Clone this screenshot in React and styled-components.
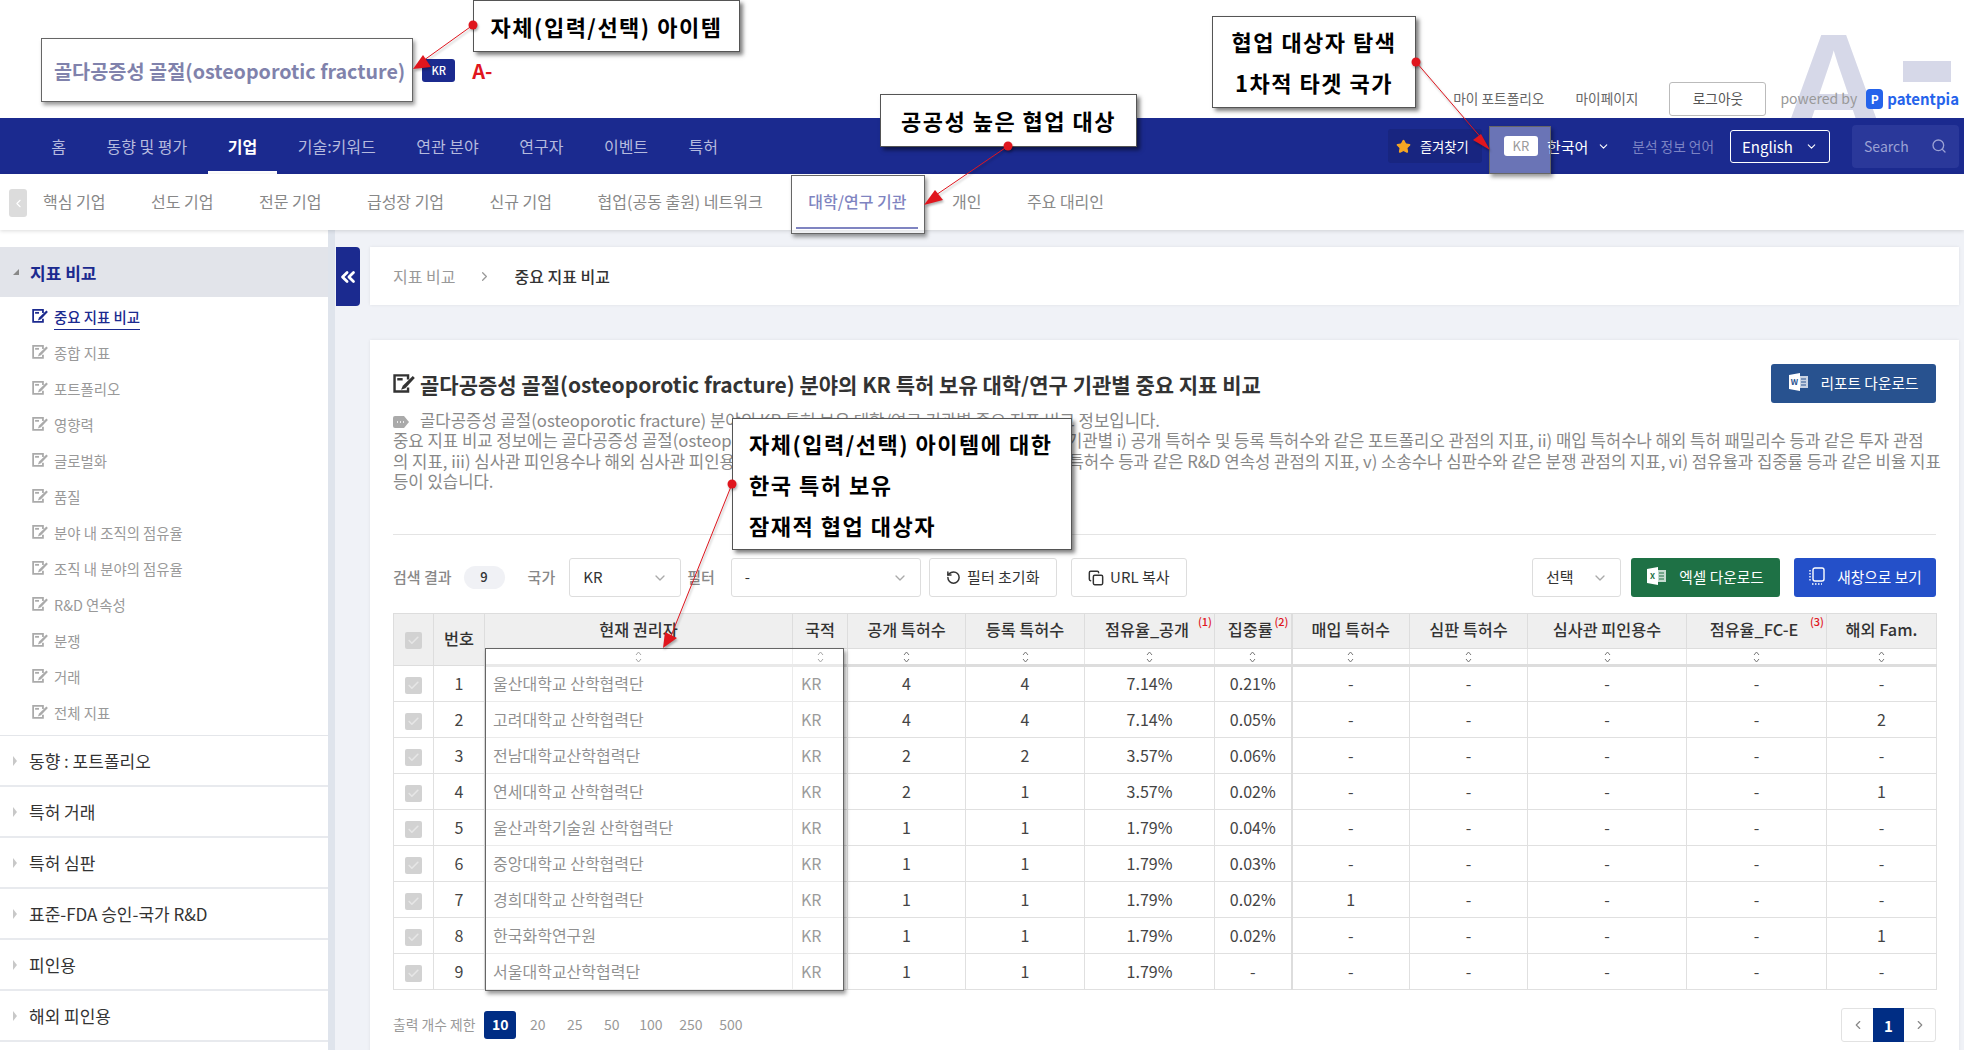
import React from "react";
import styled, { createGlobalStyle } from "styled-components";
import { ChevronDown, ChevronLeft, ChevronRight, ChevronsLeft, Search, Star, RotateCcw, Copy, Check } from "lucide-react";

const GlobalStyle = createGlobalStyle`
    html, body { margin: 0; padding: 0; background: #f0f2f7; }
    * { box-sizing: border-box; }
    body { font-family: "Noto Sans CJK KR", "Noto Sans", sans-serif; color: #333; }
`;

const Page = styled.div`
    position: relative;
    width: 1964px;
    height: 1050px;
    overflow: hidden;
    background: #f0f2f7;
`;

/* header */
const TopBar = styled.header`
    position: relative;
    height: 118px;
    background: #fff;
    overflow: hidden;
`;
const Watermark = styled.div`
    position: absolute;
    left: 1781px;
    top: 0;
    width: 182px;
    height: 118px;
    color: #d6d8e8;
    font: 700 146px/1 "Liberation Sans", sans-serif;
    span { position: absolute; left: 0; top: 13px; }
    i { position: absolute; left: 122px; top: 61px; width: 48px; height: 21px; background: #d6d8e8; }
`;
const ItemTitle = styled.div`
    display: flex;
    align-items: center;
    height: 118px;
    padding: 23px 0 0 54px;
    h1 { margin: 0; font-size: 19.7px; font-weight: 700; color: #3d3f80; white-space: nowrap; }
`;
const CountryBadge = styled.span`
    margin-left: 17px;
    width: 33px;
    height: 23px;
    border-radius: 3px;
    background: #1b2a8f;
    color: #fff;
    font-size: 11px;
    font-weight: 500;
    text-align: center;
    line-height: 23px;
`;
const Grade = styled.span`
    margin-left: 17px;
    color: #e0161e;
    font-size: 20px;
    font-weight: 700;
`;
const UserLinks = styled.div`
    position: absolute;
    right: 5px;
    top: 82px;
    display: flex;
    align-items: center;
    height: 34px;
    font-size: 13.7px;
    color: #666;
`;
const UserLink = styled.a`
    margin-right: 31px;
    padding-bottom: 2px;
`;
const Logout = styled.button`
    width: 97px;
    height: 34px;
    margin-right: 14px;
    padding: 0 0 3px;
    border: 1px solid #bbb;
    border-radius: 3px;
    background: #fff;
    color: #555;
    font: inherit;
`;
const Powered = styled.span`
    color: #999;
    font-size: 14px;
    margin-right: 9px;
    padding-bottom: 2px;
`;
const LogoMark = styled.span`
    width: 17px;
    height: 20px;
    border-radius: 4px;
    background: #2563eb;
    color: #fff;
    font-size: 12px;
    font-weight: 700;
    text-align: center;
    line-height: 20px;
    margin-right: 4px;
`;
const LogoText = styled.span`
    color: #2563eb;
    font-size: 15px;
    font-weight: 700;
    padding-bottom: 2px;
`;

const NavBar = styled.nav`
    display: flex;
    align-items: center;
    height: 56px;
    padding-left: 31px;
    background: #1b2a8f;
`;
const NavItem = styled.a`
    display: flex;
    align-items: center;
    height: 56px;
    padding: 0 20.25px;
    font-size: 16px;
    color: ${p => (p.$active ? "#fff" : "#b5bade")};
    font-weight: ${p => (p.$active ? 700 : 400)};
    border-bottom: 3px solid ${p => (p.$active ? "#fff" : "transparent")};
    border-top: 3px solid transparent;
`;
const NavRight = styled.div`
    margin-left: auto;
    display: flex;
    align-items: center;
    padding-right: 5px;
`;
const Favorite = styled.div`
    display: flex;
    align-items: center;
    gap: 9px;
    width: 94px;
    height: 34px;
    padding-left: 8px;
    border-radius: 3px;
    background: #182580;
    color: #fff;
    font-size: 13.3px;
`;
const LangChip = styled.span`
    margin-left: 22px;
    width: 34px;
    height: 20px;
    border-radius: 3px;
    background: #fff;
    color: #666;
    font-size: 13px;
    text-align: center;
    line-height: 19px;
`;
const LangName = styled.span`
    margin-left: 9px;
    color: #fff;
    font-size: 15px;
`;
const LangChevron = styled(ChevronDown)`
    margin-left: 9px;
    color: #fff;
`;
const LangCaption = styled.span`
    margin-left: 22px;
    color: #7c83c4;
    font-size: 13.7px;
`;
const EnglishSelect = styled.div`
    display: flex;
    align-items: center;
    justify-content: space-between;
    width: 100px;
    height: 33px;
    margin-left: 16px;
    padding: 0 11px;
    border: 1px solid #fff;
    border-radius: 3px;
    color: #fff;
    font-size: 15px;
`;
const SearchBox = styled.div`
    display: flex;
    align-items: center;
    justify-content: space-between;
    width: 107px;
    height: 43px;
    margin-left: 22px;
    padding: 0 12px;
    border-radius: 4px;
    background: #2a389a;
    color: #9ba1d4;
    font-size: 14px;
`;

const SubNav = styled.div`
    position: relative;
    z-index: 1;
    display: flex;
    align-items: flex-start;
    height: 56px;
    padding-left: 9px;
    background: #fff;
    box-shadow: 0 1px 4px rgba(0, 0, 0, 0.14);
`;
const PrevTab = styled.span`
    display: flex;
    align-items: center;
    justify-content: center;
    width: 18px;
    height: 28px;
    margin: 15px 16px 0 0;
    border-radius: 3px;
    background: #dcdcdc;
    color: #fff;
`;
const SubItem = styled.a`
    display: flex;
    align-items: center;
    height: 55px;
    padding: ${p => (p.$active ? "0 12px" : "0")};
    margin: ${p => (p.$active ? "0 33.5px 0 -12px" : "0 45.5px 0 0")};
    font-size: 16px;
    white-space: nowrap;
    color: ${p => (p.$active ? "#3b43a0" : "#888")};
    font-weight: ${p => (p.$active ? 500 : 400)};
    border-bottom: 2px solid ${p => (p.$active ? "#3b43a0" : "transparent")};
`;

/* body */
const Body = styled.div`
    display: flex;
    height: 820px;
`;
const Sidebar = styled.aside`
    width: 335px;
    flex: none;
    padding-top: 17px;
    background: #fff;
    border-right: 7px solid #dfe4ec;
`;
const GroupHead = styled.div`
    display: flex;
    align-items: center;
    height: 50px;
    padding-left: 13px;
    background: #e2e4ea;
    color: #1b2a8f;
    font-size: 17px;
    font-weight: 700;
    &::before {
        content: "";
        width: 0;
        height: 0;
        margin-right: 11px;
        border-left: 6px solid transparent;
        border-bottom: 6px solid #888;
    }
`;
const MenuList = styled.ul`
    list-style: none;
    margin: 0;
    padding: 1px 0 6px 32px;
    border-bottom: 1px solid #e4e6ea;
    height: 439px;
`;
const MenuItem = styled.li`
    display: flex;
    align-items: center;
    gap: 6px;
    height: 36px;
    font-size: 14.4px;
    color: ${p => (p.$active ? "#1b2a8f" : "#999")};
    font-weight: ${p => (p.$active ? 500 : 400)};
    span { ${p => p.$active && "border-bottom: 1px solid #1b2a8f; padding-bottom: 2px; margin-top: 3px;"} }
`;
const Section = styled.div`
    display: flex;
    align-items: center;
    height: 51px;
    padding-left: 13px;
    border-bottom: 2px solid #e8eaee;
    font-size: 17px;
    color: #333;
    &::before {
        content: "";
        width: 0;
        height: 0;
        margin-right: 12px;
        border-top: 5px solid transparent;
        border-bottom: 5px solid transparent;
        border-left: 4px solid #c8c8c8;
    }
`;
const Collapse = styled.button`
    flex: none;
    width: 24px;
    height: 59px;
    margin: 17px 10px 0 1px;
    padding: 0;
    border: 0;
    border-radius: 0 4px 4px 0;
    background: #1b2a8f;
    color: #fff;
    display: flex;
    align-items: center;
    justify-content: center;
`;
const Content = styled.main`
    width: 1589px;
    flex: none;
    padding-top: 17px;
`;
const Breadcrumb = styled.div`
    display: flex;
    align-items: center;
    height: 58px;
    padding-left: 23px;
    background: #fff;
    box-shadow: 0 0 3px rgba(0, 0, 0, 0.08);
    font-size: 16px;
    color: #999;
    svg { margin: 0 22px 0 22px; color: #999; }
    b { color: #333; font-weight: 500; }
`;
const Card = styled.section`
    height: 720px;
    margin-top: 35px;
    padding: 24px 23px 0;
    background: #fff;
    box-shadow: 0 0 3px rgba(0, 0, 0, 0.08);
`;
const TitleRow = styled.div`
    display: flex;
    align-items: center;
    justify-content: space-between;
    height: 39px;
`;
const CardTitle = styled.h2`
    display: flex;
    align-items: center;
    gap: 5px;
    margin: 0;
    font-size: 21px;
    font-weight: 700;
    color: #333;
`;
const ActionButton = styled.button`
    display: flex;
    flex: none;
    align-items: center;
    justify-content: center;
    gap: 12px;
    width: ${p => p.$w}px;
    height: 39px;
    margin-left: ${p => p.$ml || 0}px;
    padding: 0 0 3px;
    border: 0;
    border-radius: 3px;
    background: ${p => p.$bg};
    color: #fff;
    font: inherit;
    font-size: 14.7px;
`;
const Desc = styled.p`
    margin: 7px 0 43px;
    font-size: 16.7px;
    line-height: 20.3px;
    color: #888;
    white-space: nowrap;
    svg { vertical-align: -1px; margin-right: 11px; }
`;
const Divider = styled.hr`
    margin: 0 0 23px;
    border: 0;
    border-top: 1px solid #e4e4e4;
`;
const Toolbar = styled.div`
    display: flex;
    align-items: center;
    height: 39px;
    margin-bottom: 16px;
`;
const ToolLabel = styled.span`
    flex: none;
    margin-left: ${p => p.$ml || 0}px;
    padding-bottom: 3px;
    font-size: 15px;
    font-weight: 500;
    color: #888;
`;
const CountPill = styled.span`
    flex: none;
    width: 41px;
    height: 23px;
    margin-left: 12px;
    border-radius: 12px;
    background: #f0f1f5;
    color: #333;
    font-size: 13px;
    font-weight: 500;
    text-align: center;
    line-height: 22px;
`;
const SelectBox = styled.div`
    display: flex;
    flex: none;
    align-items: center;
    justify-content: space-between;
    width: ${p => p.$w}px;
    height: 39px;
    margin-left: ${p => p.$ml || 0}px;
    padding: 0 12px 3px 13px;
    border: 1px solid #ddd;
    border-radius: 3px;
    font-size: 15px;
    color: #333;
    svg { color: #aaa; margin-top: 3px; }
`;
const GhostButton = styled.button`
    display: flex;
    flex: none;
    align-items: center;
    justify-content: center;
    gap: 6px;
    width: ${p => p.$w}px;
    height: 39px;
    margin-left: ${p => p.$ml || 0}px;
    padding: 0 0 3px;
    border: 1px solid #ddd;
    border-radius: 3px;
    background: #fff;
    color: #333;
    font: inherit;
    font-size: 15px;
    svg { margin-top: 3px; }
`;
const Spacer = styled.div`
    flex: 1;
`;

/* table */
const Table = styled.table`
    width: 1543px;
    table-layout: fixed;
    border-collapse: collapse;
    font-size: 16px;
    border: 1px solid #ddd;
`;
const Th = styled.th`
    position: relative;
    height: 35px;
    padding: ${p => (p.$noted ? "0 5px 4px 0" : "0 0 4px")};
    background: #efefef;
    border: 1px solid #ddd;
    ${p => p.$thick && "border-right: 2px solid #ddd;"}
    font-size: 16.3px;
    font-weight: 500;
    color: #333;
    white-space: nowrap;
    sup {
        position: absolute;
        top: 0;
        right: 2px;
        color: #e0161e;
        font-size: 11px;
        line-height: 14px;
    }
`;
const SortCell = styled.td`
    height: 17px;
    padding: 0;
    text-align: center;
    line-height: 0;
    border: 1px solid #e6e6e6;
    border-bottom: 3px solid #ddd;
    ${p => p.$thick && "border-right: 2px solid #ddd;"}
`;
const Td = styled.td`
    height: 36px;
    padding: ${p => (p.$left ? "0 0 2px 8px" : "0 0 2px")};
    border: 1px solid #e0e0e0;
    ${p => p.$thick && "border-right: 2px solid #ddd;"}
    text-align: ${p => (p.$left ? "left" : "center")};
    color: ${p => p.$color || "#444"};
    white-space: nowrap;
`;
const CheckMark = styled.span`
    display: inline-flex;
    align-items: center;
    justify-content: center;
    width: 17px;
    height: 17px;
    border-radius: 2px;
    background: #d2d2d2;
    color: #e6e6e6;
    vertical-align: middle;
`;

/* paging */
const Footer = styled.div`
    display: flex;
    align-items: center;
    justify-content: space-between;
    margin-top: 18px;
`;
const Limits = styled.div`
    display: flex;
    align-items: center;
    font-size: 13.8px;
    color: #999;
`;
const LimitLabel = styled.span`
    margin-right: 9px;
    padding-bottom: 2px;
`;
const LimitItem = styled.span`
    width: ${p => p.$w || 37}px;
    height: 28px;
    margin-right: ${p => (p.$active ? 3 : 0)}px;
    border-radius: 3px;
    text-align: center;
    line-height: 27px;
    font-size: 14px;
    font-weight: ${p => (p.$active ? 700 : 400)};
    color: ${p => (p.$active ? "#fff" : "#999")};
    background: ${p => (p.$active ? "#002d84" : "transparent")};
`;
const Pager = styled.div`
    display: flex;
    height: 34px;
    border: 1px solid #e2e2e2;
    border-radius: 3px;
    align-items: center;
    color: #888;
`;
const PageNo = styled.span`
    display: flex;
    align-items: center;
    justify-content: center;
    width: 31px;
    height: 34px;
    color: ${p => (p.$active ? "#fff" : "#888")};
    background: ${p => (p.$active ? "#002d84" : "transparent")};
    font-size: 15px;
    font-weight: 700;
`;

/* slide annotations over the page */
const Highlight = styled.div`
    position: absolute;
    z-index: 5;
    left: ${p => p.$x}px;
    top: ${p => p.$y}px;
    width: ${p => p.$w}px;
    height: ${p => p.$h}px;
    border: 1px solid #666;
    background: rgba(255, 255, 255, 0.35);
    box-shadow: 2px 3px 4px rgba(0, 0, 0, 0.4);
`;
const Callout = styled.div`
    position: absolute;
    z-index: 6;
    left: ${p => p.$x}px;
    top: ${p => p.$y}px;
    width: ${p => p.$w}px;
    height: ${p => p.$h}px;
    padding: ${p => p.$pad || "0"};
    display: flex;
    flex-direction: column;
    justify-content: center;
    align-items: ${p => (p.$center ? "center" : "flex-start")};
    background: #fff;
    border: 1px solid #555;
    box-shadow: 3px 3px 4px rgba(0, 0, 0, 0.5);
    color: #000;
    font-size: 22px;
    font-weight: 700;
    letter-spacing: 1.5px;
    line-height: 41px;
    white-space: nowrap;
`;
const ArrowLayer = styled.svg`
    position: absolute;
    z-index: 7;
    left: 0;
    top: 0;
    pointer-events: none;
    filter: drop-shadow(1px 2px 1px rgba(0, 0, 0, 0.3));
`;

const EditIcon = ({ color = "#333", size = 16 }) => (
    <svg width={size} height={size * 0.86} viewBox="0 0 16 14" fill="none">
        <path d="M11 4V1H1v12h10v-3" stroke={color} strokeWidth="1.8" />
        <rect x="3" y="3" width="4" height="1.8" fill={color} />
        <path d="M14.5 1.5l1.5 1.5-7 7.5-3.2 1.2 1.3-3z" fill={color} />
    </svg>
);
const SortMark = () => (
    <svg width="7" height="12" viewBox="0 0 7 12" fill="none" stroke="#777" strokeWidth="1">
        <path d="M1 4l2.5-3L6 4M1 8l2.5 3L6 8" />
    </svg>
);
const SheetIcon = ({ letter, color }) => (
    <svg width="20" height="18" viewBox="0 0 20 18">
        <rect x="9" y="3" width="10" height="12" fill="#fff" opacity="0.75" />
        <path d="M12 6h5M12 9h5M12 12h5" stroke={color} strokeWidth="1" />
        <path d="M0 2l11-2v18L0 16z" fill="#fff" />
        <text x="5.5" y="12" fontSize="8" fontWeight="700" textAnchor="middle" fill={color}>{letter}</text>
    </svg>
);
const NewWindowIcon = () => (
    <svg width="17" height="18" viewBox="0 0 17 18" fill="none" stroke="#fff" strokeWidth="1.4">
        <rect x="5" y="1" width="11" height="13" rx="2" />
        <path d="M2 3v12M4 17h10" strokeDasharray="1.5 1.5" />
    </svg>
);

const columns = [40, 51, 308, 55, 118, 119, 130, 77, 118, 118, 159, 140, 110];
const heads = [
    { label: "현재 권리자" },
    { label: "국적" },
    { label: "공개 특허수" },
    { label: "등록 특허수" },
    { label: "점유율_공개", note: "(1)" },
    { label: "집중률", note: "(2)", thick: true },
    { label: "매입 특허수" },
    { label: "심판 특허수" },
    { label: "심사관 피인용수" },
    { label: "점유율_FC-E", note: "(3)" },
    { label: "해외 Fam." },
];
const rows = [
    ["울산대학교 산학협력단", "4", "4", "7.14%", "0.21%", "-", "-"],
    ["고려대학교 산학협력단", "4", "4", "7.14%", "0.05%", "-", "2"],
    ["전남대학교산학협력단", "2", "2", "3.57%", "0.06%", "-", "-"],
    ["연세대학교 산학협력단", "2", "1", "3.57%", "0.02%", "-", "1"],
    ["울산과학기술원 산학협력단", "1", "1", "1.79%", "0.04%", "-", "-"],
    ["중앙대학교 산학협력단", "1", "1", "1.79%", "0.03%", "-", "-"],
    ["경희대학교 산학협력단", "1", "1", "1.79%", "0.02%", "1", "-"],
    ["한국화학연구원", "1", "1", "1.79%", "0.02%", "-", "1"],
    ["서울대학교산학협력단", "1", "1", "1.79%", "-", "-", "-"],
];
const navItems = ["홈", "동향 및 평가", "기업", "기술:키워드", "연관 분야", "연구자", "이벤트", "특허"];
const subItems = ["핵심 기업", "선도 기업", "전문 기업", "급성장 기업", "신규 기업", "협업(공동 출원) 네트워크", "대학/연구 기관", "개인", "주요 대리인"];
const menuItems = ["중요 지표 비교", "종합 지표", "포트폴리오", "영향력", "글로벌화", "품질", "분야 내 조직의 점유율", "조직 내 분야의 점유율", "R&D 연속성", "분쟁", "거래", "전체 지표"];
const sections = ["동향 : 포트폴리오", "특허 거래", "특허 심판", "표준-FDA 승인-국가 R&D", "피인용", "해외 피인용"];
const arrows = [
    { from: [473, 25], to: [420, 63], head: "413,69 423,55 431,67" },
    { from: [1416, 62], to: [1483, 140], head: "1490,150 1473,140 1481,134" },
    { from: [1008, 146], to: [933, 197], head: "924,205 935,190 943,200" },
    { from: [732, 484], to: [671, 636], head: "663,648 665,632 677,638" },
];

export default function App() {
    return (
        <Page>
            <GlobalStyle />
            <TopBar>
                <Watermark><span>A</span><i /></Watermark>
                <ItemTitle>
                    <h1>골다공증성 골절(osteoporotic fracture)</h1>
                    <CountryBadge>KR</CountryBadge>
                    <Grade>A-</Grade>
                </ItemTitle>
                <UserLinks>
                    <UserLink>마이 포트폴리오</UserLink>
                    <UserLink>마이페이지</UserLink>
                    <Logout>로그아웃</Logout>
                    <Powered>powered by</Powered>
                    <LogoMark>P</LogoMark>
                    <LogoText>patentpia</LogoText>
                </UserLinks>
            </TopBar>
            <NavBar>
                {navItems.map(item => <NavItem key={item} $active={item === "기업"}>{item}</NavItem>)}
                <NavRight>
                    <Favorite><Star size={15} fill="#f5a623" color="#f5a623" />즐겨찾기</Favorite>
                    <LangChip>KR</LangChip>
                    <LangName>한국어</LangName>
                    <LangChevron size={13} />
                    <LangCaption>분석 정보 언어</LangCaption>
                    <EnglishSelect>English<ChevronDown size={13} /></EnglishSelect>
                    <SearchBox>Search<Search size={16} /></SearchBox>
                </NavRight>
            </NavBar>
            <SubNav>
                <PrevTab><ChevronLeft size={13} /></PrevTab>
                {subItems.map(item => <SubItem key={item} $active={item === "대학/연구 기관"}>{item}</SubItem>)}
            </SubNav>
            <Body>
                <Sidebar>
                    <GroupHead>지표 비교</GroupHead>
                    <MenuList>
                        {menuItems.map((item, i) => (
                            <MenuItem key={item} $active={i === 0}>
                                <EditIcon color={i === 0 ? "#1b2a8f" : "#aaa"} />
                                <span>{item}</span>
                            </MenuItem>
                        ))}
                    </MenuList>
                    {sections.map(item => <Section key={item}>{item}</Section>)}
                </Sidebar>
                <Collapse><ChevronsLeft size={22} strokeWidth={3} /></Collapse>
                <Content>
                    <Breadcrumb>지표 비교<ChevronRight size={15} /><b>중요 지표 비교</b></Breadcrumb>
                    <Card>
                        <TitleRow>
                            <CardTitle>
                                <EditIcon size={22} />
                                골다공증성 골절(osteoporotic fracture) 분야의 KR 특허 보유 대학/연구 기관별 중요 지표 비교
                            </CardTitle>
                            <ActionButton $w={165} $bg="#28528f"><SheetIcon letter="W" color="#28528f" />리포트 다운로드</ActionButton>
                        </TitleRow>
                        <Desc>
                            <svg width="16" height="12" viewBox="0 0 16 12"><path d="M2 0h9l5 6-5 6H2a2 2 0 01-2-2V2a2 2 0 012-2z" fill="#aaa" /><path d="M4 6h1M7 6h1M10 6h1" stroke="#fff" strokeWidth="1.4" /></svg>
                            골다공증성 골절(osteoporotic fracture) 분야의 KR 특허 보유 대학/연구 기관별 중요 지표 비교 정보입니다.<br />
                            중요 지표 비교 정보에는 골다공증성 골절(osteoporotic fracture) 분야의 KR 특허 보유 대학/연구 기관별 i) 공개 특허수 및 등록 특허수와 같은 포트폴리오 관점의 지표, ii) 매입 특허수나 해외 특허 패밀리수 등과 같은 투자 관점<br />
                            의 지표, iii) 심사관 피인용수나 해외 심사관 피인용수 등과 같은 기술적 영향력 관점의 지표, iv) 연속 특허수 등과 같은 R&D 연속성 관점의 지표, v) 소송수나 심판수와 같은 분쟁 관점의 지표, vi) 점유율과 집중률 등과 같은 비율 지표<br />
                            등이 있습니다.
                        </Desc>
                        <Divider />
                        <Toolbar>
                            <ToolLabel>검색 결과</ToolLabel>
                            <CountPill>9</CountPill>
                            <ToolLabel $ml={23}>국가</ToolLabel>
                            <SelectBox $w={112} $ml={14}>KR<ChevronDown size={16} /></SelectBox>
                            <ToolLabel $ml={6}>필터</ToolLabel>
                            <SelectBox $w={190} $ml={16}>-<ChevronDown size={16} /></SelectBox>
                            <GhostButton $w={128} $ml={8}><RotateCcw size={15} strokeWidth={2.4} />필터 초기화</GhostButton>
                            <GhostButton $w={116} $ml={14}><Copy size={16} strokeWidth={2.2} />URL 복사</GhostButton>
                            <Spacer />
                            <SelectBox $w={89}>선택<ChevronDown size={16} /></SelectBox>
                            <ActionButton $w={149} $ml={10} $bg="#1e7145"><SheetIcon letter="X" color="#1e7145" />엑셀 다운로드</ActionButton>
                            <ActionButton $w={142} $ml={14} $bg="#2450c9"><NewWindowIcon />새창으로 보기</ActionButton>
                        </Toolbar>
                        <Table>
                            <colgroup>
                                {columns.map((w, i) => <col key={i} width={w} />)}
                            </colgroup>
                            <thead>
                                <tr>
                                    <Th rowSpan={2}><CheckMark><Check size={13} strokeWidth={3} /></CheckMark></Th>
                                    <Th rowSpan={2}>번호</Th>
                                    {heads.map(h => (
                                        <Th key={h.label} $thick={h.thick} $noted={!!h.note}>{h.label}{h.note && <sup>{h.note}</sup>}</Th>
                                    ))}
                                </tr>
                                <tr>
                                    {heads.map(h => <SortCell key={h.label} $thick={h.thick}><SortMark /></SortCell>)}
                                </tr>
                            </thead>
                            <tbody>
                                {rows.map((r, i) => (
                                    <tr key={r[0]}>
                                        <Td><CheckMark><Check size={13} strokeWidth={3} /></CheckMark></Td>
                                        <Td>{i + 1}</Td>
                                        <Td $left $color="#555">{r[0]}</Td>
                                        <Td $left $color="#666">KR</Td>
                                        <Td>{r[1]}</Td>
                                        <Td>{r[2]}</Td>
                                        <Td>{r[3]}</Td>
                                        <Td $thick>{r[4]}</Td>
                                        <Td>{r[5]}</Td>
                                        <Td>-</Td>
                                        <Td>-</Td>
                                        <Td>-</Td>
                                        <Td>{r[6]}</Td>
                                    </tr>
                                ))}
                            </tbody>
                        </Table>
                        <Footer>
                            <Limits>
                                <LimitLabel>출력 개수 제한</LimitLabel>
                                <LimitItem $active $w={32}>10</LimitItem>
                                <LimitItem>20</LimitItem>
                                <LimitItem>25</LimitItem>
                                <LimitItem>50</LimitItem>
                                <LimitItem $w={41}>100</LimitItem>
                                <LimitItem $w={39}>250</LimitItem>
                                <LimitItem $w={41}>500</LimitItem>
                            </Limits>
                            <Pager>
                                <PageNo><ChevronLeft size={14} /></PageNo>
                                <PageNo $active>1</PageNo>
                                <PageNo><ChevronRight size={14} /></PageNo>
                            </Pager>
                        </Footer>
                    </Card>
                </Content>
            </Body>

            <Highlight $x={41} $y={38} $w={372} $h={64} />
            <Highlight $x={791} $y={175} $w={134} $h={59} />
            <Highlight $x={1489} $y={126} $w={62} $h={48} />
            <Highlight $x={485} $y={648} $w={359} $h={343} />
            <Callout $x={473} $y={0} $w={267} $h={52} $center>자체(입력/선택) 아이템</Callout>
            <Callout $x={1212} $y={16} $w={204} $h={92} $center>
                <span>협업 대상자 탐색</span>
                <span>1차적 타겟 국가</span>
            </Callout>
            <Callout $x={880} $y={94} $w={257} $h={53} $center>공공성 높은 협업 대상</Callout>
            <Callout $x={732} $y={418} $w={340} $h={132} $pad="0 0 0 16px">
                <span>자체(입력/선택) 아이템에 대한</span>
                <span>한국 특허 보유</span>
                <span>잠재적 협업 대상자</span>
            </Callout>
            <ArrowLayer width="1964" height="1050">
                {arrows.map(a => (
                    <g key={a.head}>
                        <line x1={a.from[0]} y1={a.from[1]} x2={a.to[0]} y2={a.to[1]} stroke="#e0161e" strokeWidth="1" />
                        <circle cx={a.from[0]} cy={a.from[1]} r="4.5" fill="#e0161e" />
                        <polygon points={a.head} fill="#e0161e" />
                    </g>
                ))}
            </ArrowLayer>
        </Page>
    );
}
